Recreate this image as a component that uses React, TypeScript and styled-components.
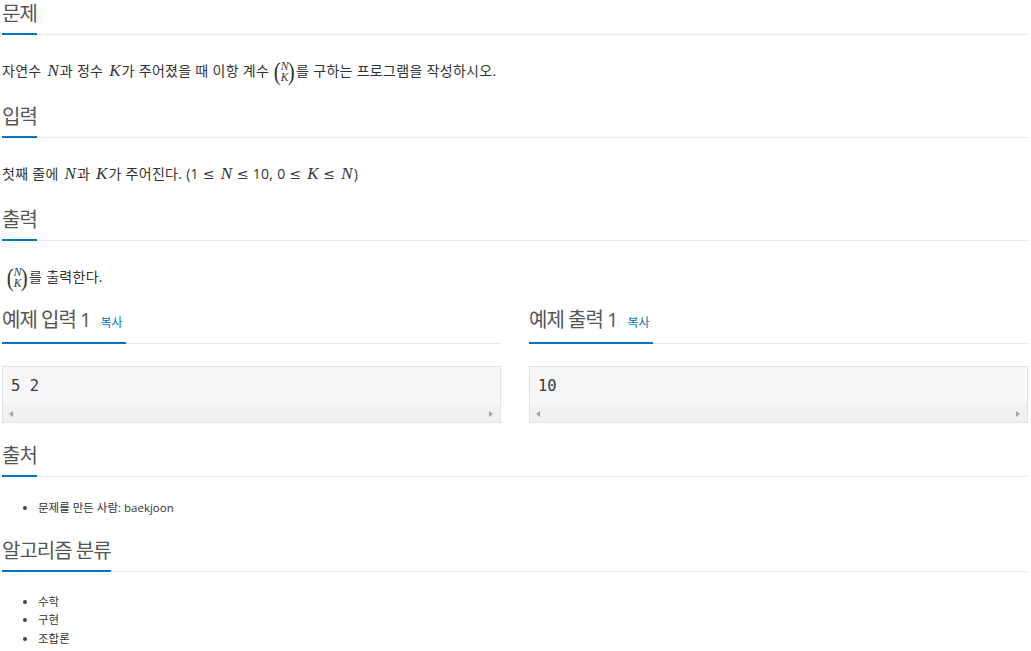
import React from "react";
import styled, { createGlobalStyle } from "styled-components";

const Global = createGlobalStyle`
  html, body { margin: 0; padding: 0; background: #fff; }
  body {
    font-family: "Open Sans", "Noto Sans CJK KR", sans-serif;
    color: #333;
  }
`;

const Page = styled.div`
  padding: 0 3px 0 2px;
`;

const Section = styled.section``;

const Headline = styled.div<{ $mb: number }>`
  display: flex;
  align-items: flex-end;
  border-bottom: 1px dotted #d6d6d6;
  margin-bottom: ${(p) => p.$mb}px;
`;

const Title = styled.h2`
  margin: 0 0 -1px 0;
  padding-bottom: 5px;
  font-size: 20px;
  line-height: 28px;
  font-weight: 400;
  letter-spacing: -1px;
  color: #555;
  border-bottom: 2px solid #0076c0;
  white-space: nowrap;
`;

const CopyLink = styled.a`
  font-size: 12px;
  letter-spacing: 0;
  color: #0076c0;
  margin-left: 10px;
  margin-right: 3px;
  text-decoration: none;
  cursor: pointer;
`;

const Para = styled.p<{ $mb: number }>`
  margin: 0 0 ${(p) => p.$mb}px 0;
  font-size: 14px;
  line-height: 22px;
  letter-spacing: 0.3px;
  color: #333;
  white-space: nowrap;
`;

const MathVar = styled.span`
  font-family: "Liberation Serif", "DejaVu Serif", serif;
  font-style: italic;
  font-weight: 400;
  font-size: 17px;
  line-height: 14px;
  letter-spacing: 0;
  margin: 0 1px 0 2px;
`;

const Rel = styled.span`
  font-family: "DejaVu Serif", "Liberation Serif", serif;
  font-size: 14px;
  line-height: 14px;
  letter-spacing: 0;
  margin: 0 4px;
`;

const Binom = styled.span<{ $ml?: number }>`
  display: inline-flex;
  align-items: center;
  height: 22px;
  margin: -6px 0 -6px ${(p) => p.$ml ?? 3}px;
  vertical-align: middle;
  letter-spacing: 0;
`;

const Paren = styled.span`
  font-family: "Liberation Serif", serif;
  font-size: 26px;
  line-height: 22px;
  color: #333;
  transform: scaleX(0.8);
`;

const Stack = styled.span`
  display: inline-flex;
  flex-direction: column;
  align-items: center;
  font-family: "Liberation Serif", serif;
  font-style: italic;
  font-size: 11.5px;
  line-height: 11px;
  margin: 0 -1px;
`;

const Samples = styled.div`
  display: grid;
  grid-template-columns: 1fr 1fr;
  column-gap: 28px;
  margin-bottom: 19px;
`;

const SampleCol = styled.div``;

const CodeBox = styled.div`
  border: 1px solid #e1e1e8;
  background: #f7f7f9;
`;

const Pre = styled.pre`
  margin: 0;
  padding: 9px 8px;
  font-family: "DejaVu Sans Mono", "Liberation Mono", monospace;
  font-size: 15.5px;
  line-height: 20px;
  color: #3a3a3a;
`;

const ScrollBar = styled.div`
  height: 17px;
  background: #f1f1f1;
  display: flex;
  align-items: center;
  justify-content: space-between;
  padding: 0 7px 0 6px;
`;

const Arrow = styled.span<{ $dir: "left" | "right" }>`
  width: 0;
  height: 0;
  border-top: 3.5px solid transparent;
  border-bottom: 3.5px solid transparent;
  ${(p) =>
    p.$dir === "left"
      ? "border-right: 4px solid #a3a3a3;"
      : "border-left: 4px solid #a3a3a3;"}
`;

const List = styled.ul<{ $mb: number }>`
  margin: 0 0 ${(p) => p.$mb}px 0;
  padding-left: 36px;
  font-size: 11.5px;
  line-height: 18.5px;
  color: #333;
  li::marker { font-size: 11px; color: #444; }
`;

function BinomNK({ ml }: { ml?: number }) {
  return (
    <Binom $ml={ml}>
      <Paren>(</Paren>
      <Stack>
        <span>N</span>
        <span>K</span>
      </Stack>
      <Paren>)</Paren>
    </Binom>
  );
}

function Sample({ title, value }: { title: string; value: string }) {
  return (
    <SampleCol>
      <Headline $mb={22}>
        <Title>
          {title}
          <CopyLink>복사</CopyLink>
        </Title>
      </Headline>
      <CodeBox>
        <Pre>{value}</Pre>
        <ScrollBar>
          <Arrow $dir="left" />
          <Arrow $dir="right" />
        </ScrollBar>
      </CodeBox>
    </SampleCol>
  );
}

export default function App() {
  return (
    <Page>
      <Global />
      <Section>
        <Headline $mb={25}>
          <Title>문제</Title>
        </Headline>
        <Para $mb={21}>
          자연수 <MathVar>N</MathVar>과 정수 <MathVar>K</MathVar>가 주어졌을 때 이항 계수{" "}
          <BinomNK ml={0} />를 구하는 프로그램을 작성하시오.
        </Para>
      </Section>

      <Section>
        <Headline $mb={25}>
          <Title>입력</Title>
        </Headline>
        <Para $mb={21}>
          첫째 줄에 <MathVar>N</MathVar>과 <MathVar>K</MathVar>가 주어진다. (1
          <Rel>≤</Rel>
          <MathVar>N</MathVar>
          <Rel>≤</Rel>10, 0<Rel>≤</Rel>
          <MathVar>K</MathVar>
          <Rel>≤</Rel>
          <MathVar>N</MathVar>)
        </Para>
      </Section>

      <Section>
        <Headline $mb={25}>
          <Title>출력</Title>
        </Headline>
        <Para $mb={18}>
          <BinomNK ml={4} />를 출력한다.
        </Para>
      </Section>

      <Samples>
        <Sample title="예제 입력 1" value="5 2" />
        <Sample title="예제 출력 1" value="10" />
      </Samples>

      <Section>
        <Headline $mb={22}>
          <Title>출처</Title>
        </Headline>
        <List $mb={19}>
          <li>문제를 만든 사람: baekjoon</li>
        </List>
      </Section>

      <Section>
        <Headline $mb={21}>
          <Title>알고리즘 분류</Title>
        </Headline>
        <List $mb={0}>
          <li>수학</li>
          <li>구현</li>
          <li>조합론</li>
        </List>
      </Section>
    </Page>
  );
}
